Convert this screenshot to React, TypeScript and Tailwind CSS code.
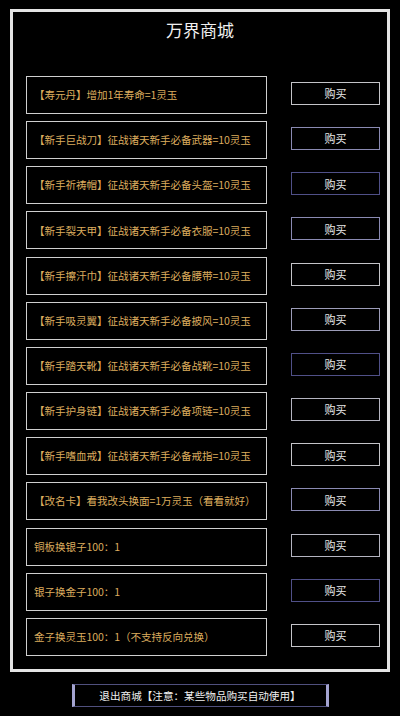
import React from "react";

const items: { text: string; btn: string }[] = [
  { text: "【寿元丹】增加1年寿命=1灵玉", btn: "border-[#c4c4c8]" },
  { text: "【新手巨战刀】征战诸天新手必备武器=10灵玉", btn: "border-[#8a8ab2]" },
  { text: "【新手祈祷帽】征战诸天新手必备头盔=10灵玉", btn: "border-[#505088]" },
  { text: "【新手裂天甲】征战诸天新手必备衣服=10灵玉", btn: "border-[#8a8ab2]" },
  { text: "【新手擦汗巾】征战诸天新手必备腰带=10灵玉", btn: "border-[#c4c4c8]" },
  { text: "【新手吸灵翼】征战诸天新手必备披风=10灵玉", btn: "border-[#9c9cb8]" },
  { text: "【新手踏天靴】征战诸天新手必备战靴=10灵玉", btn: "border-[#505088]" },
  { text: "【新手护身链】征战诸天新手必备项链=10灵玉", btn: "border-[#b4b4c0]" },
  { text: "【新手嗜血戒】征战诸天新手必备戒指=10灵玉", btn: "border-[#c4c4c8]" },
  { text: "【改名卡】看我改头换面=1万灵玉（看看就好）", btn: "border-[#8a8ab2]" },
  { text: "铜板换银子100：1", btn: "border-[#b4b4c0]" },
  { text: "银子换金子100：1", btn: "border-[#505088]" },
  { text: "金子换灵玉100：1（不支持反向兑换）", btn: "border-[#c4c4c8]" },
];

export default function App() {
  return (
    <div className="w-[400px] h-[716px] bg-black pt-[9px] px-[10px] font-['Noto_Sans_CJK_SC',sans-serif] overflow-hidden">
      <div className="border-[3px] border-[#e4e4e4] h-[663px] flex flex-col pl-[13px]">
        <div className="h-[36px] leading-[36px] text-center text-[17px] text-[#f0f0f0] pr-[13px]">
          万界商城
        </div>
        <div className="mt-[28px] flex flex-col gap-[7.17px]">
          {items.map((it, i) => (
            <div key={i} className="flex flex-row items-start">
              <div className="w-[241px] h-[38px] border border-[#cfcfcf] flex items-center pl-[7px] text-[10.6px] tracking-[-0.1px] text-[#dcac5e] whitespace-nowrap">
                {it.text}
              </div>
              <div
                className={`ml-[24px] mt-[6px] w-[89px] h-[23px] border ${it.btn} flex items-center justify-center text-[11px] text-[#e8e8e8]`}
              >
                购买
              </div>
            </div>
          ))}
        </div>
      </div>
      <div className="mt-[12px] mx-auto w-[257px] h-[23px] border-y border-[#50507e] border-x-[3px] border-x-[#a4a4d0] flex items-center justify-center text-[10.6px] text-[#f0f0f0]">
        退出商城【注意：某些物品购买自动使用】
      </div>
    </div>
  );
}
